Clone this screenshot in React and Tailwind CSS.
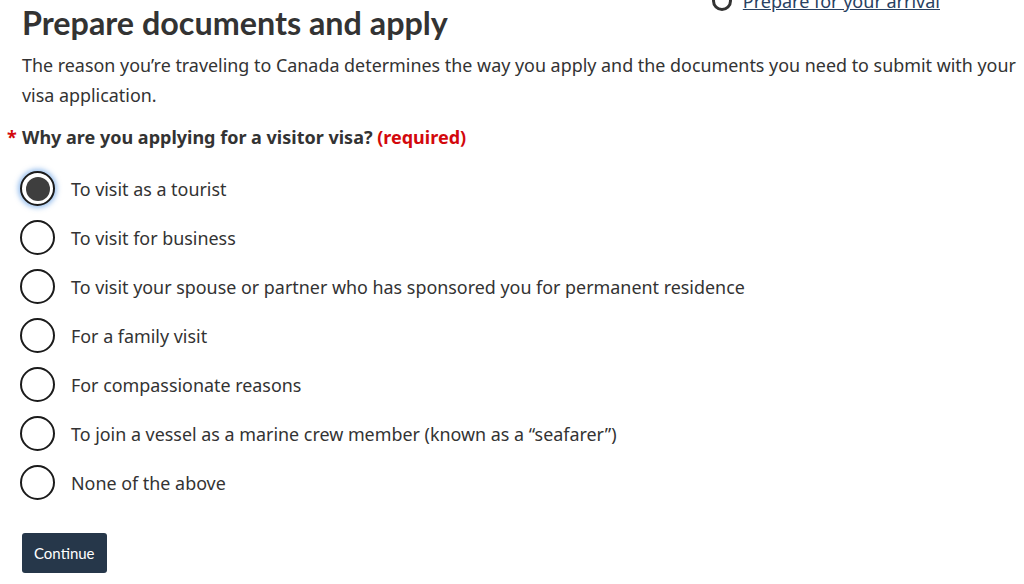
import React, { useState } from "react";

const options = [
  "To visit as a tourist",
  "To visit for business",
  "To visit your spouse or partner who has sponsored you for permanent residence",
  "For a family visit",
  "For compassionate reasons",
  "To join a vessel as a marine crew member (known as a \u201cseafarer\u201d)",
  "None of the above",
];

function Radio({ checked }) {
  return (
    <span
      className={
        "ml-[-2px] flex h-[35px] w-[35px] shrink-0 items-center justify-center rounded-full border-2 border-[#1b1b1b] bg-white " +
        (checked ? "shadow-[0_0_5px_2px_rgba(56,132,222,0.5)]" : "")
      }
    >
      {checked && <span className="h-[24px] w-[24px] rounded-full bg-[#3e3e3e]" />}
    </span>
  );
}

export default function App() {
  const [reason, setReason] = useState(0);

  return (
    <div className="h-[584px] w-[1024px] overflow-hidden bg-white text-[#333] font-['Noto_Sans',sans-serif]">
      <div className="w-[1024px] pl-[22px]">
        <div className="flex items-start justify-between">
          <h2 className="mt-[4px] font-['Lato',sans-serif] text-[32.3px] font-bold leading-[38px] text-[#333]">
            Prepare documents and apply
          </h2>
          <div className="mr-[84px] mt-[-11px] flex items-center gap-[11px]">
            <span className="h-[20px] w-[20px] rounded-full border-[3px] border-[#333]" />
            <a href="#" className="text-[18px] leading-[24px] text-[#284162] underline">
              Prepare for your arrival
            </a>
          </div>
        </div>

        <p className="mt-[8px] text-[17.9px] leading-[30px]">
          The reason you’re traveling to Canada determines the way you apply and the documents you need to submit with your visa application.
        </p>

        <fieldset className="mt-[14px]">
          <legend className="relative text-[18px] font-bold leading-[26px]">
            <span className="absolute left-[-15px] top-0 text-[#d3080c]">*</span>
            Why are you applying for a visitor visa? <span className="text-[#d3080c]">(required)</span>
          </legend>
          <div className="mt-[21px] flex flex-col gap-[14px]">
            {options.map((o, i) => (
              <label key={o} className="flex cursor-pointer items-center gap-[16px]" onClick={() => setReason(i)}>
                <Radio checked={reason === i} />
                <span className="text-[17.9px] leading-[26px]">{o}</span>
              </label>
            ))}
          </div>
        </fieldset>

        <button className="mt-[33px] h-[40px] rounded-[3px] bg-[#26374a] px-[12px] font-['Lato',sans-serif] text-[15px] text-white">
          Continue
        </button>
      </div>
    </div>
  );
}
